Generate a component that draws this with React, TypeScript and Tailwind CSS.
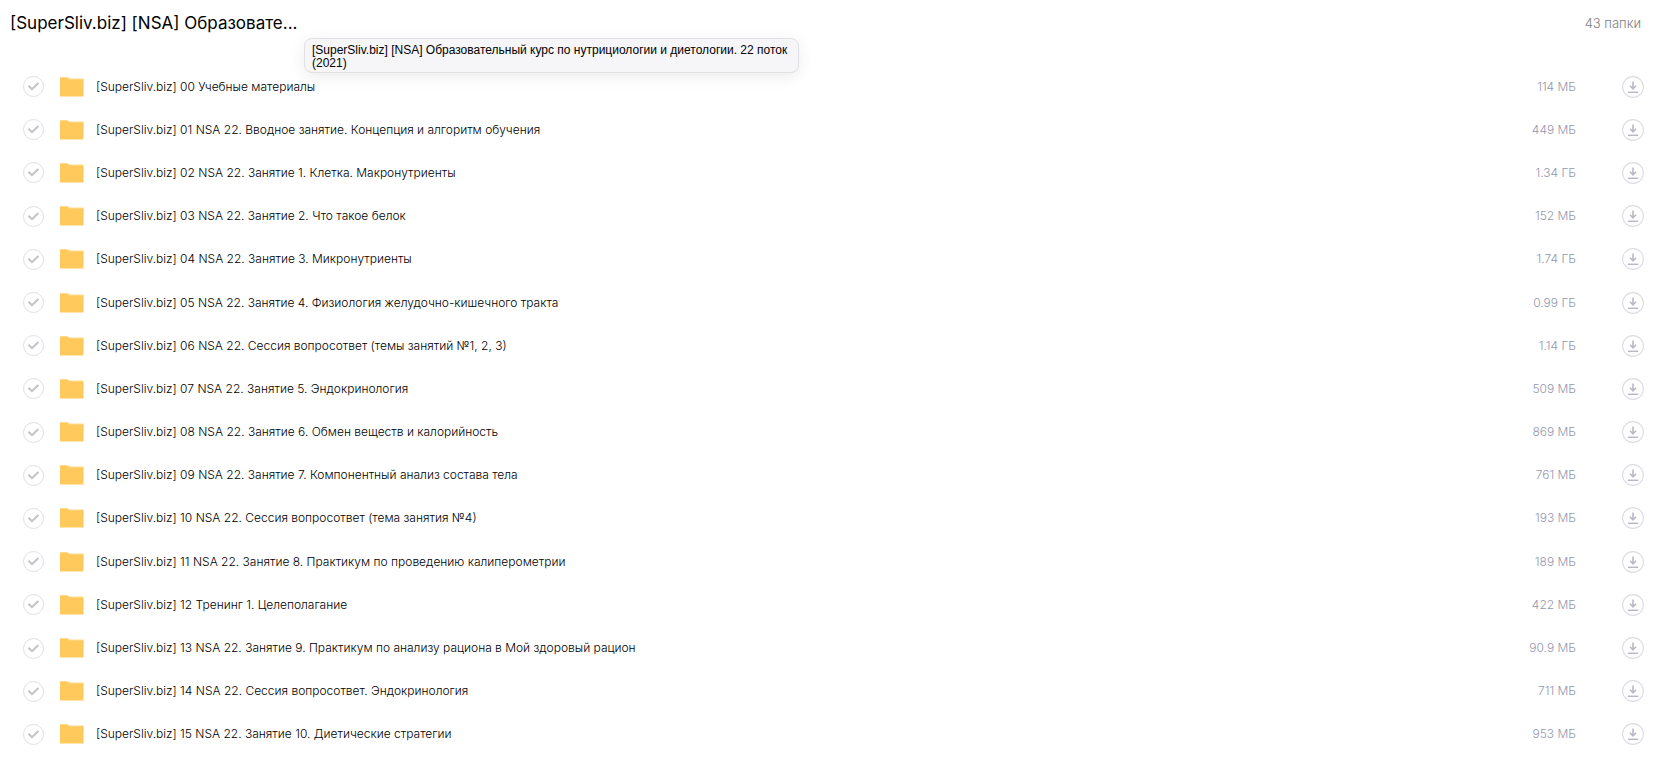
import { useState } from "react";

type Folder = { name: string; size: string };

const folders: Folder[] = [
  { name: "[SuperSliv.biz] 00 Учебные материалы", size: "114 МБ" },
  { name: "[SuperSliv.biz] 01 NSA 22. Вводное занятие. Концепция и алгоритм обучения", size: "449 МБ" },
  { name: "[SuperSliv.biz] 02 NSA 22. Занятие 1. Клетка. Макронутриенты", size: "1.34 ГБ" },
  { name: "[SuperSliv.biz] 03 NSA 22. Занятие 2. Что такое белок", size: "152 МБ" },
  { name: "[SuperSliv.biz] 04 NSA 22. Занятие 3. Микронутриенты", size: "1.74 ГБ" },
  { name: "[SuperSliv.biz] 05 NSA 22. Занятие 4. Физиология желудочно-кишечного тракта", size: "0.99 ГБ" },
  { name: "[SuperSliv.biz] 06 NSA 22. Сессия вопросответ (темы занятий №1, 2, 3)", size: "1.14 ГБ" },
  { name: "[SuperSliv.biz] 07 NSA 22. Занятие 5. Эндокринология", size: "509 МБ" },
  { name: "[SuperSliv.biz] 08 NSA 22. Занятие 6. Обмен веществ и калорийность", size: "869 МБ" },
  { name: "[SuperSliv.biz] 09 NSA 22. Занятие 7. Компонентный анализ состава тела", size: "761 МБ" },
  { name: "[SuperSliv.biz] 10 NSA 22. Сессия вопросответ (тема занятия №4)", size: "193 МБ" },
  { name: "[SuperSliv.biz] 11 NSA 22. Занятие 8. Практикум по проведению калиперометрии", size: "189 МБ" },
  { name: "[SuperSliv.biz] 12 Тренинг 1. Целеполагание", size: "422 МБ" },
  { name: "[SuperSliv.biz] 13 NSA 22. Занятие 9. Практикум по анализу рациона в Мой здоровый рацион", size: "90.9 МБ" },
  { name: "[SuperSliv.biz] 14 NSA 22. Сессия вопросответ. Эндокринология", size: "711 МБ" },
  { name: "[SuperSliv.biz] 15 NSA 22. Занятие 10. Диетические стратегии", size: "953 МБ" },
];

function FolderIcon() {
  return (
    <svg className="w-6 h-5 shrink-0" viewBox="0 0 24 20" aria-hidden="true">
      <path d="M0 1Q0 0 1 0H6.5Q7.5 0 8.3 .7L9.8 1.6H23.5V8H0Z" fill="#ffdb8f" />
      <path d="M0 1.8Q0 .8 1 .8H6.3Q7.3 .8 8 1.4L9.7 2.6H23.5V19.5H0Z" fill="#ffc95c" />
    </svg>
  );
}

function DownloadIcon() {
  return (
    <svg className="w-[22px] h-[22px]" viewBox="0 0 22 22" fill="none" aria-hidden="true">
      <circle cx="11" cy="11" r="10.4" stroke="#dcdce6" strokeWidth="1.1" />
      <path d="M11 5.5V12.5M8 9.8L11 12.8L14 9.8" stroke="#b9b9c5" strokeWidth="1.6" />
      <path d="M6 16.3H16.2" stroke="#b9b9c5" strokeWidth="1.5" />
    </svg>
  );
}

function FolderRow({ folder, index }: { folder: Folder; index: number }) {
  const [checked, setChecked] = useState(false);
  const id = `folder-${index}`;

  return (
    <li className="flex flex-1 items-center min-h-[43px] pl-[23px] pr-[15px]">
      <span className="relative w-[21px] h-[21px] shrink-0">
        <input
          id={id}
          type="checkbox"
          checked={checked}
          onChange={() => setChecked(!checked)}
          className="block w-full h-full appearance-none rounded-full border border-[#dedee6] checked:bg-gray-100 cursor-pointer"
        />
        <svg className="absolute inset-0 w-full h-full pointer-events-none" viewBox="0 0 21 21" fill="none" aria-hidden="true">
          <path d="M5.5 9.8L9 13.2L15.4 7" stroke="#c2c2c8" strokeWidth="2" />
        </svg>
      </span>
      <label htmlFor={id} className="flex flex-1 items-center gap-3 min-w-0 ml-4">
        <FolderIcon />
        <span className="truncate text-black">{folder.name}</span>
      </label>
      <span className="text-[#9498ae]">{folder.size}</span>
      <button type="button" aria-label={folder.name} className="ml-[46px] shrink-0 cursor-pointer">
        <DownloadIcon />
      </button>
    </li>
  );
}

export default function App() {
  return (
    <div className="flex flex-col min-h-screen pb-0.5 bg-white font-['Inter',sans-serif] text-xs font-light leading-5">
      <header className="relative flex items-center justify-between h-[46px] mb-[19px] pl-[10px] pr-[18px]">
        <h1 className="text-[17px] font-normal text-black">[SuperSliv.biz] [NSA] Образовате...</h1>
        <span className="text-[13px] text-[#808080]">43 папки</span>
        <div
          role="tooltip"
          className="absolute left-[304px] top-[38px] w-[495px] px-[7px] pt-[5px] pb-[2px] rounded-lg border border-[#e1e1e5] bg-[#f6f6f9] shadow-[0_4px_16px_rgba(0,0,0,0.08)] font-['Liberation_Sans',sans-serif] text-xs leading-[13px] font-normal text-black"
        >
          [SuperSliv.biz] [NSA] Образовательный курс по нутрициологии и диетологии. 22 поток (2021)
        </div>
      </header>
      <ul className="flex flex-1 flex-col">
        {folders.map((folder, index) => (
          <FolderRow key={folder.name} folder={folder} index={index} />
        ))}
      </ul>
    </div>
  );
}
